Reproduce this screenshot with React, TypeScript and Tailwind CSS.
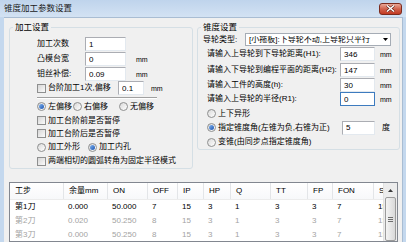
import React from 'react'

const rows = [
    ['第1刀', '0.000', '50.000', '7', '15', '3', '1', '3', '3', '7', '15'],
    ['第2刀', '0.020', '50.250', '8', '15', '3', '1', '3', '3', '7', '15'],
    ['第3刀', '0.000', '50.250', '8', '15', '3', '1', '3', '3', '7', '15'],
    ['第4刀', '0.000', '50.250', '8', '15', '3', '1', '3', '3', '7', '15'],
]

const headers = ['工步', '余量mm', 'ON', 'OFF', 'IP', 'HP', 'Q', 'TT', 'FP', 'FON', 'SV']

const gridCols = 'grid grid-cols-[53px_44px_40px_30px_26px_27px_40px_37px_25px_41px_10px]'

function Box({ checked }: { checked?: boolean }) {
    return (
        <span className="w-[9px] h-[9px] shrink-0 border border-[#8e8f8f] bg-gradient-to-br from-[#d6d6d6] to-[#fbfbfb] flex items-center justify-center">
            {checked && <span className="w-[5px] h-[5px] bg-[#2e6ec7]" />}
        </span>
    )
}

function Radio({ on }: { on?: boolean }) {
    return (
        <span className="w-[9px] h-[9px] shrink-0 rounded-full border border-[#8e8f8f] bg-gradient-to-br from-[#d9d9d9] to-white flex items-center justify-center">
            {on && <span className="w-[5px] h-[5px] rounded-full bg-gradient-to-br from-[#7fb2f0] to-[#1d55b0]" />}
        </span>
    )
}

function Field({ value, w, focused }: { value: string; w: string; focused?: boolean }) {
    return (
        <input
            readOnly
            value={value}
            className={`${w} h-[14px] px-[3px] bg-white text-[8px] outline-none border ${focused ? 'border-[#3d7bbf]' : 'border-[#abadb3] border-r-[#e3e9ef] border-b-[#e3e9ef]'}`}
        />
    )
}

export default function App() {
    return (
        <div className="w-[406px] h-[242px] overflow-hidden flex flex-col bg-[#c4d8ee] text-[8px] leading-none text-black font-['Liberation_Sans','Noto_Sans_CJK_SC',sans-serif]">
            {/* title bar */}
            <div className="h-[17px] shrink-0 flex items-center justify-between pl-[4px] pr-[4px] bg-gradient-to-b from-[#bfd4ec] to-[#d3e2f3]">
                <span className="text-[8.5px] text-[#1a1a1a]">锥度加工参数设置</span>
                <div className="w-[23px] h-[12px] rounded-[3px] border border-[#7c2b1e] bg-gradient-to-b from-[#e9a797] via-[#d0614c] to-[#c23a22] flex items-center justify-center">
                    <svg width="9" height="7" viewBox="0 0 9 7">
                        <path d="M1 0.5 L8 6.5 M8 0.5 L1 6.5" stroke="#5a1a10" strokeWidth="2.6" />
                        <path d="M1 0.5 L8 6.5 M8 0.5 L1 6.5" stroke="#fff" strokeWidth="1.5" />
                    </svg>
                </div>
            </div>

            {/* body */}
            <div className="flex-1 min-h-0 ml-[4px] mr-[3px] bg-[#f0f0f0] border-t border-r border-[#a9bdd3] pl-[5px] pr-[2px] pt-[3px] flex flex-col">
                <div className="flex gap-[4px] items-start shrink-0">
                    {/* 加工设置 */}
                    <fieldset className="w-[184px] border border-[#d5dfe5] rounded-[3px] pb-0">
                        <legend className="ml-[3px] px-[2px] h-[12px] leading-[12px] text-[8.5px]">加工设置</legend>
                        <div className="flex flex-col pl-[27px]">
                            <div className="h-[15px] mt-[4px] flex items-start">
                                <span className="w-[48px] h-[14px] flex items-center">加工次数</span>
                                <Field value="1" w="w-[41px]" />
                            </div>
                            <div className="h-[15px] flex items-start">
                                <span className="w-[48px] h-[14px] flex items-center">凸模台宽</span>
                                <Field value="0" w="w-[41px]" />
                                <span className="ml-[10px] h-[14px] flex items-center text-[7px]">mm</span>
                            </div>
                            <div className="h-[14px] flex items-start">
                                <span className="w-[48px] h-[14px] flex items-center">钼丝补偿:</span>
                                <Field value="0.09" w="w-[41px]" />
                                <span className="ml-[10px] h-[14px] flex items-center text-[7px]">mm</span>
                            </div>
                            <div className="h-[15px] flex items-start">
                                <span className="w-[81px] h-[14px] flex items-center gap-[2px] whitespace-nowrap">
                                    <Box />
                                    <span>台阶加工1次,偏移</span>
                                </span>
                                <Field value="0.1" w="w-[26px]" />
                                <span className="ml-[7px] h-[14px] flex items-center text-[7px]">mm</span>
                            </div>
                            <div className="w-[120px] h-[2px] mt-[1px] border-t border-[#a0a0a0] border-b border-b-white" />
                            <div className="h-[15px] flex items-center whitespace-nowrap">
                                <span className="w-[36px] flex items-center gap-[2px]"><Radio on />左偏移</span>
                                <span className="w-[46px] flex items-center gap-[2px]"><Radio />右偏移</span>
                                <span className="flex items-center gap-[2px]"><Radio />无偏移</span>
                            </div>
                            <div className="h-[13px] flex items-center gap-[2px] whitespace-nowrap"><Box />加工台阶前是否暂停</div>
                            <div className="h-[13px] flex items-center gap-[2px] whitespace-nowrap"><Box />加工台阶后是否暂停</div>
                            <div className="h-[14px] flex items-center whitespace-nowrap">
                                <span className="w-[51px] flex items-center gap-[2px]"><Radio />加工外形</span>
                                <span className="flex items-center gap-[2px]"><Radio on />加工内孔</span>
                            </div>
                            <div className="h-[14px] flex items-center gap-[2px] whitespace-nowrap"><Box />两端相切的圆弧转角为固定半径模式</div>
                        </div>
                    </fieldset>

                    {/* 锥度设置 */}
                    <fieldset className="w-[203px] border border-[#d5dfe5] rounded-[3px]">
                        <legend className="ml-[3px] px-[2px] h-[12px] leading-[12px] text-[8.5px]">锥度设置</legend>
                        <div className="flex flex-col whitespace-nowrap">
                            <div className="h-[14px] flex items-start pl-[5px]">
                                <span className="w-[42px] h-[13px] flex items-center">导轮类型:</span>
                                <div className="w-[146px] h-[13px] bg-white border border-[#a5acb5] flex items-center overflow-hidden">
                                    <span className="flex-1 pl-[3px] overflow-hidden">[小拖板]:下导轮不动,上导轮只平行</span>
                                    <span className="w-[10px] h-full flex items-center justify-center bg-white">
                                        <svg width="5" height="3" viewBox="0 0 5 3"><path d="M0 0 H5 L2.5 3 Z" fill="#000" /></svg>
                                    </span>
                                </div>
                            </div>
                            <div className="h-[15px] flex items-start pl-[9px]">
                                <span className="w-[133px] h-[14px] flex items-center">请输入上导轮到下导轮距离(H1):</span>
                                <Field value="346" w="w-[35px]" />
                                <span className="ml-[5px] h-[14px] flex items-center text-[7px]">mm</span>
                            </div>
                            <div className="h-[16px] flex items-center pl-[9px]">
                                <span className="w-[133px] h-[14px] flex items-center">请输入下导轮到编程平面的距离(H2):</span>
                                <Field value="147" w="w-[35px]" />
                                <span className="ml-[5px] h-[14px] flex items-center text-[7px]">mm</span>
                            </div>
                            <div className="h-[14px] flex items-start pl-[9px]">
                                <span className="w-[133px] h-[14px] flex items-center">请输入工件的高度(h):</span>
                                <Field value="30" w="w-[35px]" />
                                <span className="ml-[5px] h-[14px] flex items-center text-[7px]">mm</span>
                            </div>
                            <div className="h-[15px] flex items-start pl-[9px]">
                                <span className="w-[133px] h-[14px] flex items-center">请输入上导轮的半径(R1):</span>
                                <Field value="0" w="w-[35px]" focused />
                                <span className="ml-[5px] h-[14px] flex items-center text-[7px]">mm</span>
                            </div>
                            <div className="h-[13px] flex items-center gap-[2px] pl-[9px]"><Radio />上下异形</div>
                            <div className="h-[15px] flex items-center pl-[9px]">
                                <span className="w-[135px] flex items-center gap-[2px]"><Radio on />指定锥度角(左锥为负,右锥为正)</span>
                                <Field value="5" w="w-[33px]" />
                                <span className="ml-[7px]">度</span>
                            </div>
                            <div className="h-[14px] flex items-center gap-[2px] pl-[9px]"><Radio />变锥(由同步点指定锥度角)</div>
                        </div>
                    </fieldset>
                </div>

                {/* table */}
                <div className="mt-[13px] mr-[2px] flex-1 min-h-0 border border-[#828790] bg-white flex overflow-hidden">
                    <div className="flex-1 flex flex-col">
                        <div className={`${gridCols} h-[17px] shrink-0 border-b border-[#ececec] bg-gradient-to-b from-white to-[#f7f8fa]`}>
                            {headers.map((h, i) => (
                                <div key={h} className={`flex items-center pl-[5px] whitespace-nowrap overflow-hidden ${i > 0 ? 'border-l border-[#e3e5e8]' : ''}`}>
                                    {h}
                                </div>
                            ))}
                        </div>
                        {rows.map((r, ri) => (
                            <div key={ri} className={`${gridCols} h-[14px] shrink-0 ${ri === 0 ? 'text-black' : 'text-[#a3a3a3]'}`}>
                                {r.map((c, ci) => (
                                    <div key={ci} className="flex items-center pl-[5px] whitespace-nowrap overflow-hidden">
                                        {c}
                                    </div>
                                ))}
                            </div>
                        ))}
                    </div>
                    {/* scrollbar */}
                    <div className="w-[14px] shrink-0 bg-[#ececec] border-l border-[#e2e2e2] flex flex-col">
                        <div className="h-[14px] shrink-0 flex items-center justify-center">
                            <svg width="5" height="3" viewBox="0 0 5 3"><path d="M0 3 H5 L2.5 0 Z" fill="#3a3a3a" /></svg>
                        </div>
                        <div className="flex-1 mx-[1px] rounded-[2px] border border-[#9b9b9b] bg-gradient-to-r from-[#f4f4f4] to-[#d9d9d9] flex flex-col items-center pt-[19px] gap-[1px]">
                            <span className="w-[5px] h-px bg-[#6d6d6d]" />
                            <span className="w-[5px] h-px bg-[#6d6d6d]" />
                            <span className="w-[5px] h-px bg-[#6d6d6d]" />
                        </div>
                    </div>
                </div>
            </div>
        </div>
    )
}
